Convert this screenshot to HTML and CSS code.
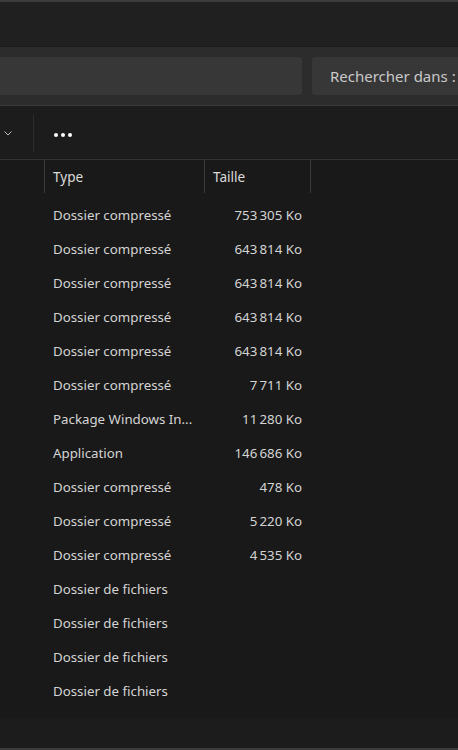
FILE: index.html
```html
<!DOCTYPE html>
<html lang="fr">
<head>
    <meta charset="UTF-8">
    <title>Explorateur</title>
    <link rel="stylesheet" href="styles.css">
</head>
<body>
    <div class="window">
        <div class="titlebar"></div>

        <div class="addressbar">
            <div class="address-box"></div>
            <div class="search-box">Rechercher dans :</div>
        </div>

        <div class="toolbar">
            <span class="chevron">
                <svg width="8" height="5" viewBox="0 0 8 5"><path d="M0.5 0.5 L4 4 L7.5 0.5" fill="none" stroke="#bdbdbd" stroke-width="1"/></svg>
            </span>
            <span class="divider"></span>
            <span class="more">
                <svg width="20" height="6" viewBox="0 0 20 6"><circle cx="3" cy="3" r="2" fill="#fff"/><circle cx="10" cy="3" r="2" fill="#fff"/><circle cx="17" cy="3" r="2" fill="#fff"/></svg>
            </span>
        </div>

        <div class="list">
            <div class="row header">
                <div class="cell name"></div>
                <div class="cell type">Type</div>
                <div class="cell size">Taille</div>
                <div class="cell rest"></div>
            </div>
            <div class="rows">
                <div class="row"><div class="cell name"></div><div class="cell type">Dossier compressé</div><div class="cell size">753&#8239;305 Ko</div></div>
                <div class="row"><div class="cell name"></div><div class="cell type">Dossier compressé</div><div class="cell size">643&#8239;814 Ko</div></div>
                <div class="row"><div class="cell name"></div><div class="cell type">Dossier compressé</div><div class="cell size">643&#8239;814 Ko</div></div>
                <div class="row"><div class="cell name"></div><div class="cell type">Dossier compressé</div><div class="cell size">643&#8239;814 Ko</div></div>
                <div class="row"><div class="cell name"></div><div class="cell type">Dossier compressé</div><div class="cell size">643&#8239;814 Ko</div></div>
                <div class="row"><div class="cell name"></div><div class="cell type">Dossier compressé</div><div class="cell size">7&#8239;711 Ko</div></div>
                <div class="row"><div class="cell name"></div><div class="cell type">Package Windows In...</div><div class="cell size">11&#8239;280 Ko</div></div>
                <div class="row"><div class="cell name"></div><div class="cell type">Application</div><div class="cell size">146&#8239;686 Ko</div></div>
                <div class="row"><div class="cell name"></div><div class="cell type">Dossier compressé</div><div class="cell size">478 Ko</div></div>
                <div class="row"><div class="cell name"></div><div class="cell type">Dossier compressé</div><div class="cell size">5&#8239;220 Ko</div></div>
                <div class="row"><div class="cell name"></div><div class="cell type">Dossier compressé</div><div class="cell size">4&#8239;535 Ko</div></div>
                <div class="row"><div class="cell name"></div><div class="cell type">Dossier de fichiers</div><div class="cell size"></div></div>
                <div class="row"><div class="cell name"></div><div class="cell type">Dossier de fichiers</div><div class="cell size"></div></div>
                <div class="row"><div class="cell name"></div><div class="cell type">Dossier de fichiers</div><div class="cell size"></div></div>
                <div class="row"><div class="cell name"></div><div class="cell type">Dossier de fichiers</div><div class="cell size"></div></div>
            </div>
        </div>

        <div class="statusbar"></div>
    </div>
</body>
</html>
```

FILE: styles.css
```css
:root {
    --frame: #3c3c3c;
    --title-bg: #202020;
    --address-bg: #2c2c2c;
    --box-bg: #373737;
    --toolbar-bg: #1c1c1c;
    --list-bg: #191919;
    --status-bg: #1c1c1c;
    --line: #333333;
    --text: #d4d4d4;
}

* {
    margin: 0;
    padding: 0;
    box-sizing: border-box;
    font-family: "Noto Sans", "Open Sans", sans-serif;
}

body {
    background: var(--list-bg);
    width: 458px;
    height: 750px;
    overflow: hidden;
}

.window {
    height: 750px;
    display: flex;
    flex-direction: column;
    border-top: 2px solid var(--frame);
    border-bottom: 2px solid var(--frame);
}

.titlebar {
    height: 45px;
    background: var(--title-bg);
    border-bottom: 1px solid #1a1a1a;
}

.addressbar {
    height: 59px;
    background: var(--address-bg);
    display: flex;
    align-items: center;
    gap: 10px;
    border-bottom: 1px solid #3a3a3a;
}

.address-box {
    width: 302px;
    height: 38px;
    background: var(--box-bg);
    border-radius: 0 4px 4px 0;
}

.search-box {
    flex: 1;
    height: 38px;
    background: var(--box-bg);
    border-radius: 4px 0 0 4px;
    color: #c9c9c9;
    font-size: 15px;
    line-height: 39px;
    padding-left: 18px;
    white-space: nowrap;
    overflow: hidden;
}

.toolbar {
    height: 54px;
    background: var(--toolbar-bg);
    display: flex;
    align-items: center;
    border-bottom: 1px solid var(--line);
    padding-top: 1px;
}

.chevron {
    width: 33px;
    padding-left: 4px;
    padding-top: 1px;
    display: flex;
    align-items: center;
}

.divider {
    width: 1px;
    height: 37px;
    background: #2e2e2e;
}

.more {
    margin-left: 19px;
    padding-top: 3px;
    display: flex;
    align-items: center;
}

.list {
    flex: 1;
    background: var(--list-bg);
    padding-bottom: 10px;
}

.row {
    display: grid;
    grid-template-columns: 45px 160px 106px 1fr;
    height: 34px;
    align-items: center;
    color: var(--text);
    font-size: 13.3px;
}

.header {
    height: 36px;
    align-items: stretch;
    margin-bottom: 2px;
    font-size: 13.6px;
    color: #dadada;
}

.header .cell {
    display: flex;
    align-items: center;
    height: 33px;
    border-right: 1px solid #3a3a3a;
}

.header .rest {
    border-right: none;
}

.type {
    padding-left: 8px;
    white-space: nowrap;
}

.size {
    text-align: right;
    padding-right: 9px;
    white-space: nowrap;
}

.header .size {
    justify-content: flex-start;
    padding-left: 8px;
}

.statusbar {
    height: 30px;
    background: var(--status-bg);
}
```
